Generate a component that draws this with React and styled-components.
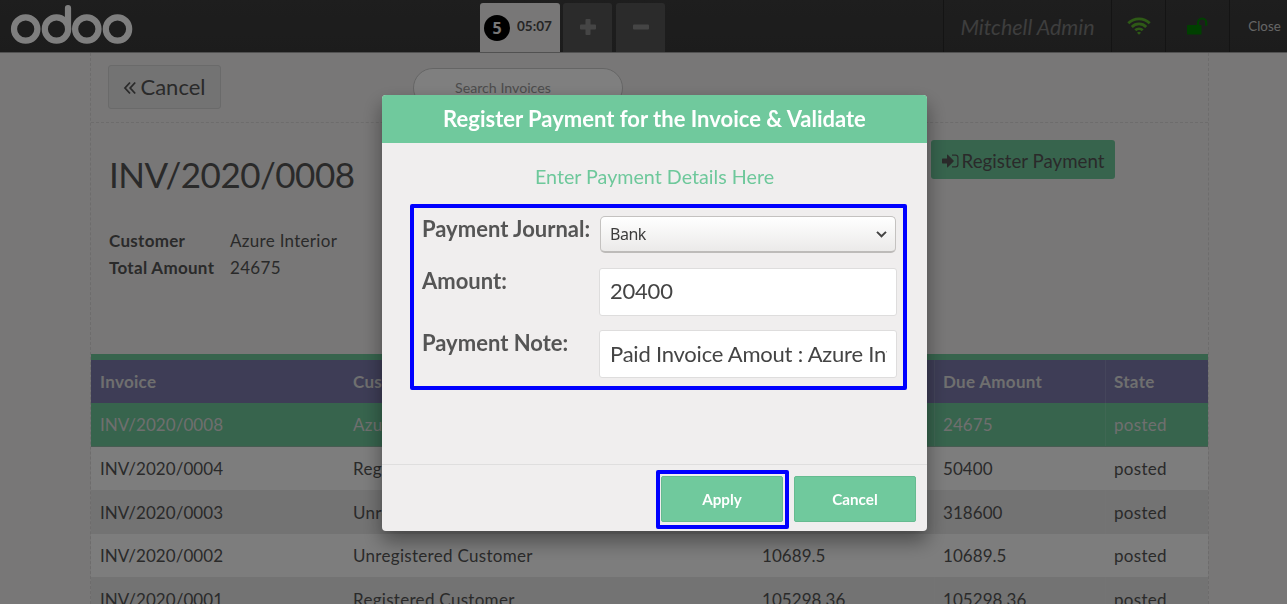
import React from "react";
import styled, { createGlobalStyle } from "styled-components";

const GlobalStyle = createGlobalStyle`
  *, *::before, *::after { box-sizing: border-box; }
  html, body { margin: 0; height: 100%; overflow: hidden; }
  body {
    font-family: Lato, "Liberation Sans", sans-serif;
    color: #555;
    background: #f0eeee;
  }
  button, input { font-family: inherit; color: inherit; }
  svg { display: block; }
`;

const GREEN = "#6ec89b";

const Page = styled.div`
  height: 604px;
  display: flex;
  flex-direction: column;
  overflow: hidden;
`;

/* Top bar */
const TopBar = styled.header`
  flex: none;
  height: 53px;
  display: flex;
  align-items: stretch;
  background: linear-gradient(#3c3c3c, #393939);
  border-bottom: 1px solid #a2a2a2;
`;

const Brand = styled.div`
  width: 480px;
  padding: 4px 0 0 10px;
`;

const OrderTabs = styled.nav`
  flex: 1;
  display: flex;
  align-items: flex-end;
`;

const OrderTab = styled.div`
  width: 80px;
  height: 49px;
  margin-right: 3px;
  padding: 0 0 0 4px;
  display: flex;
  align-items: center;
  gap: 7px;
  background: #f0eeee;
  border-radius: 3px 3px 0 0;
  font-size: 13.5px;
  font-weight: 700;
  color: #4a4a4a;
  line-height: 16px;
  span:last-child { padding-bottom: 3px; }
`;

const OrderNumber = styled.span`
  width: 26px;
  height: 26px;
  border-radius: 50%;
  display: flex;
  align-items: center;
  justify-content: center;
  background: #000;
  color: #f0eeee;
  font: 700 16px/26px "Noto Sans", sans-serif;
`;

const TabButton = styled.button`
  width: 49px;
  height: 49px;
  margin-right: 4px;
  padding: 0 0 1px;
  display: flex;
  align-items: center;
  justify-content: center;
  border: 0;
  border-radius: 3px 3px 0 0;
  background: #575757;
  color: #8b8b8b;
`;

const StatusCell = styled.div`
  width: ${(p) => p.$width}px;
  display: flex;
  align-items: center;
  justify-content: center;
  border-left: 1px solid #292929;
  color: ${(p) => p.$color || "#ccc"};
`;

const UserName = styled.span`
  font-size: 21.5px;
  font-style: italic;
  color: #7c7c7c;
  padding-top: 2px;
`;

const CloseLabel = styled.span`
  padding-left: 12px;
  font-size: 13.3px;
`;

/* Invoice screen */
const Screen = styled.main`
  flex: 1;
  width: 1119px;
  margin-left: 90px;
  min-height: 0;
  display: flex;
  flex-direction: column;
  border: dashed #dad8d8;
  border-width: 0 1px;
`;

const ScreenHeader = styled.div`
  flex: none;
  height: 70px;
  display: flex;
  align-items: flex-start;
  padding: 12px 17px 0;
  border-bottom: 1px dashed #dad8d8;
`;

const BackButton = styled.button`
  width: 113px;
  height: 44px;
  padding: 0 0 2px;
  display: flex;
  align-items: center;
  justify-content: center;
  gap: 4px;
  border: 1px solid #d4d4d4;
  border-radius: 3px;
  background: #e6e6e6;
  font-size: 22px;
  svg { margin-top: 3px; }
`;

const SearchBox = styled.div`
  width: 210px;
  height: 40px;
  margin: 3px 0 0 192px;
  padding: 0 0 1px 41px;
  display: flex;
  align-items: center;
  border: 1px solid #cbcbcb;
  border-radius: 20px;
  background: #fff;
  font-size: 14.2px;
  color: #999;
`;

const Details = styled.section`
  flex: none;
  height: 231px;
  padding: 17px 93px 0 18px;
  display: flex;
  justify-content: space-between;
  align-items: flex-start;
`;

const InvoiceTitle = styled.h1`
  margin: 12px 0 31px;
  font-size: 35px;
  letter-spacing: -0.5px;
  font-weight: 400;
  line-height: 44px;
`;

const Facts = styled.dl`
  margin: 0;
  display: grid;
  grid-template-columns: 121px auto;
  font-size: 17px;
  letter-spacing: 0.3px;
  line-height: 27px;
  dt { font-weight: 700; }
  dd { margin: 0; }
`;

const RegisterButton = styled.button`
  width: 184px;
  height: 39px;
  padding: 2px 0 0;
  display: flex;
  align-items: center;
  justify-content: center;
  gap: 3px;
  border: 0;
  border-radius: 3px;
  background: ${GREEN};
  font-size: 18.7px;
`;

const Table = styled.div`
  flex: none;
  border-top: 6px solid ${GREEN};
  font-size: 17px;
`;

const Row = styled.div`
  height: ${(p) => (p.$head ? 43 : 43.5)}px;
  display: grid;
  grid-template-columns: 253px 409px 181px 171px 103px;
  color: ${(p) => (p.$head || p.$selected ? "#dedede" : "#555")};
  font-weight: ${(p) => (p.$head ? 700 : 400)};
  background: ${(p) =>
    p.$head ? "#7c7bad" : p.$selected ? GREEN : p.$odd ? "#e6e6e6" : "#fbfbfb"};
  border-bottom: ${(p) => (p.$selected ? "1px solid #8fb8a4" : "0")};
`;

const Cell = styled.div`
  display: flex;
  align-items: center;
  padding-top: 0.5px;
  padding-left: ${(p) => (p.$ruled ? 8 : 9)}px;
  border-left: ${(p) => (p.$ruled ? "1px solid rgba(255,255,255,0.12)" : "0")};
  letter-spacing: ${(p) => (p.$words ? 0.3 : 0.05)}px;
`;

/* Dialog */
const Overlay = styled.div`
  position: fixed;
  inset: 0;
  display: flex;
  align-items: flex-start;
  padding: 95px 0 0 382px;
  background: rgba(0, 0, 0, 0.5);
`;

const Dialog = styled.div`
  width: 545px;
  height: 436px;
  display: flex;
  flex-direction: column;
  overflow: hidden;
  border-radius: 4px;
  background: #f0eeee;
  box-shadow: 0 10px 20px rgba(0, 0, 0, 0.4);
`;

const DialogTitle = styled.h2`
  flex: none;
  height: 48px;
  margin: 0;
  background: #70c99d;
  color: #fff;
  font-size: 22px;
  font-weight: 700;
  line-height: 48px;
  text-align: center;
`;

const DialogBody = styled.div`
  flex: 1;
  padding: 20px 20px 0 28px;
`;

const Hint = styled.p`
  margin: 0 8px 14px 0;
  color: #6ec89b;
  font-size: 19.7px;
  line-height: 27px;
  text-align: center;
`;

const Highlight = styled.div`
  border: 4px solid #00f;
  border-radius: 2px;
`;

const Form = styled(Highlight)`
  width: 497px;
  height: 186px;
  padding: 8px 6px 0 8px;
`;

const Field = styled.div`
  height: ${(p) => p.$height}px;
  display: flex;
  justify-content: space-between;
  align-items: flex-start;
`;

const Label = styled.label`
  font-size: 22px;
  font-weight: 700;
  line-height: 26px;
`;

const Select = styled.div`
  width: 296px;
  height: 37px;
  margin-right: 1px;
  padding: 0 8px 1px 9px;
  display: flex;
  align-items: center;
  justify-content: space-between;
  border: 1px solid #c4c2c0;
  border-bottom: 2px solid #bdbbb9;
  border-radius: 5px;
  background: linear-gradient(#fff, #ebeae9);
  color: #3c3c3c;
  font: 16px "Noto Sans", sans-serif;
  letter-spacing: -0.5px;
`;

const TextInput = styled.input`
  width: 298px;
  height: 48px;
  padding: ${(p) => (p.$low ? "0 9px 1px 10px" : "0 9px 3px 10px")};
  border: 1px solid #dedddd;
  border-radius: 3px;
  outline: 0;
  background: #fff;
  color: #444;
  font-size: 22px;
  letter-spacing: -0.22px;
`;

const DialogFooter = styled.footer`
  flex: none;
  height: 67px;
  padding: 5px 11px 0;
  display: flex;
  justify-content: flex-end;
  gap: 5px;
  border-top: 1px solid #dfdede;
`;

const ApplyFrame = styled(Highlight)`
  width: 133px;
  height: 59px;
  padding: 2px 1px;
`;

const DialogButton = styled.button`
  width: 122px;
  height: 46px;
  margin-top: ${(p) => p.$drop || 0}px;
  padding: 0;
  border: 1px solid #66bb90;
  border-radius: 2px;
  background: #70c99d;
  color: #fff;
  font-size: 15.2px;
  font-weight: 700;
`;

const OdooLogo = () => (
  <svg width="124" height="42" viewBox="0 0 124 42" fill="none" stroke="#fff" strokeWidth="6.2">
    <circle cx="15.7" cy="25" r="11.7" />
    <circle cx="46.5" cy="25" r="11.7" />
    <circle cx="76.8" cy="25" r="11.7" />
    <circle cx="107.5" cy="25" r="11.7" />
    <path d="M58 25V4" strokeLinecap="round" />
  </svg>
);

const PlusIcon = () => (
  <svg width="16" height="16" viewBox="0 0 16 16" fill="currentColor">
    <rect x="0" y="5.5" width="16" height="5" rx="1" />
    <rect x="5.5" y="0" width="5" height="16" rx="1" />
  </svg>
);

const MinusIcon = () => (
  <svg width="16" height="16" viewBox="0 0 16 16" fill="currentColor">
    <rect x="0" y="5.5" width="16" height="5" rx="1" />
  </svg>
);

const WifiIcon = () => (
  <svg width="25" height="18" viewBox="-1 0 25 18" fill="none" stroke="currentColor" strokeWidth="2.8">
    <path d="M1.3 6.3a15.2 15.2 0 0 1 21.4 0" />
    <path d="M4.8 9.9a10.2 10.2 0 0 1 14.4 0" />
    <path d="M8.3 13.3a5.3 5.3 0 0 1 7.4 0" />
    <path d="M12 17.8l-2-2.1a3 3 0 0 1 4 0z" fill="currentColor" stroke="none" />
  </svg>
);

const UnlockIcon = () => (
  <svg width="21" height="18" viewBox="0 0 21 18">
    <rect x="0" y="8" width="14.5" height="9.5" rx="0.6" fill="currentColor" />
    <path d="M11 8.5V5.6a4.1 4.1 0 0 1 8.2 0V8.8" fill="none" stroke="currentColor" strokeWidth="2.2" />
  </svg>
);

const DoubleLeftIcon = () => (
  <svg width="13" height="14" viewBox="0 0 13 14" fill="none" stroke="currentColor" strokeWidth="1.8">
    <path d="M7 1.5L2 7l5 5.5M12.2 1.5L7.2 7l5 5.5" />
  </svg>
);

const SignInIcon = () => (
  <svg width="17" height="14" viewBox="0 0 17 14">
    <path d="M0.6 4.6H5V1.2q0-.9.8-.4L11.6 6.5q.4.5 0 1L5.8 13.2q-.8.5-.8-.4V9.4H.6Q0 9.4 0 8.8V5.2q0-.6.6-.6z" fill="currentColor" />
    <path d="M10 1.1h3.6a2.3 2.3 0 0 1 2.3 2.3v7.2a2.3 2.3 0 0 1-2.3 2.3H10" fill="none" stroke="currentColor" strokeWidth="1.2" />
  </svg>
);

const ChevronIcon = () => (
  <svg width="11" height="8" viewBox="0 0 11 8" fill="none" stroke="#444" strokeWidth="2">
    <path d="M1 1.9l4.5 4.4L10 1.9" />
  </svg>
);

const columns = ["Invoice", "Customer", "Amount", "Due Amount", "State"];

const invoices = [
  ["INV/2020/0008", "Azure Interior", "24675", "24675", "posted"],
  ["INV/2020/0004", "Registered Customer", "50400", "50400", "posted"],
  ["INV/2020/0003", "Unregistered Customer", "318600", "318600", "posted"],
  ["INV/2020/0002", "Unregistered Customer", "10689.5", "10689.5", "posted"],
  ["INV/2020/0001", "Registered Customer", "105298.36", "105298.36", "posted"],
];

const Cells = ({ values }) =>
  values.map((value, i) => (
    <Cell key={i} $ruled={i > 2} $words={!/\d/.test(value)}>
      {value}
    </Cell>
  ));

export default function App() {
  return (
    <>
      <GlobalStyle />
      <Page>
        <TopBar>
          <Brand>
            <OdooLogo />
          </Brand>
          <OrderTabs>
            <OrderTab>
              <OrderNumber>5</OrderNumber>
              <span>05:07</span>
            </OrderTab>
            <TabButton aria-label="New order">
              <PlusIcon />
            </TabButton>
            <TabButton aria-label="Delete order">
              <MinusIcon />
            </TabButton>
          </OrderTabs>
          <StatusCell $width={168}>
            <UserName>Mitchell Admin</UserName>
          </StatusCell>
          <StatusCell $width={54} $color="#5cb42c">
            <WifiIcon />
          </StatusCell>
          <StatusCell $width={64} $color="#008000">
            <UnlockIcon />
          </StatusCell>
          <StatusCell $width={58}>
            <CloseLabel>Close</CloseLabel>
          </StatusCell>
        </TopBar>
        <Screen>
          <ScreenHeader>
            <BackButton>
              <DoubleLeftIcon />
              Cancel
            </BackButton>
            <SearchBox>Search Invoices</SearchBox>
          </ScreenHeader>
          <Details>
            <div>
              <InvoiceTitle>INV/2020/0008</InvoiceTitle>
              <Facts>
                <dt>Customer</dt>
                <dd>Azure Interior</dd>
                <dt>Total Amount</dt>
                <dd>24675</dd>
              </Facts>
            </div>
            <RegisterButton>
              <SignInIcon />
              Register Payment
            </RegisterButton>
          </Details>
          <Table>
            <Row $head>
              <Cells values={columns} />
            </Row>
            {invoices.map((invoice, i) => (
              <Row key={invoice[0]} $selected={i === 0} $odd={i % 2 === 0}>
                <Cells values={invoice} />
              </Row>
            ))}
          </Table>
        </Screen>
      </Page>
      <Overlay>
        <Dialog>
          <DialogTitle>Register Payment for the Invoice &amp; Validate</DialogTitle>
          <DialogBody>
            <Hint>Enter Payment Details Here</Hint>
            <Form>
              <Field $height={52}>
                <Label>Payment Journal:</Label>
                <Select>
                  Bank
                  <ChevronIcon />
                </Select>
              </Field>
              <Field $height={62}>
                <Label>Amount:</Label>
                <TextInput defaultValue="20400" />
              </Field>
              <Field $height={48}>
                <Label>Payment Note:</Label>
                <TextInput $low defaultValue="Paid Invoice Amout : Azure Interior" />
              </Field>
            </Form>
          </DialogBody>
          <DialogFooter>
            <ApplyFrame>
              <DialogButton>Apply</DialogButton>
            </ApplyFrame>
            <DialogButton $drop={6}>Cancel</DialogButton>
          </DialogFooter>
        </Dialog>
      </Overlay>
    </>
  );
}
